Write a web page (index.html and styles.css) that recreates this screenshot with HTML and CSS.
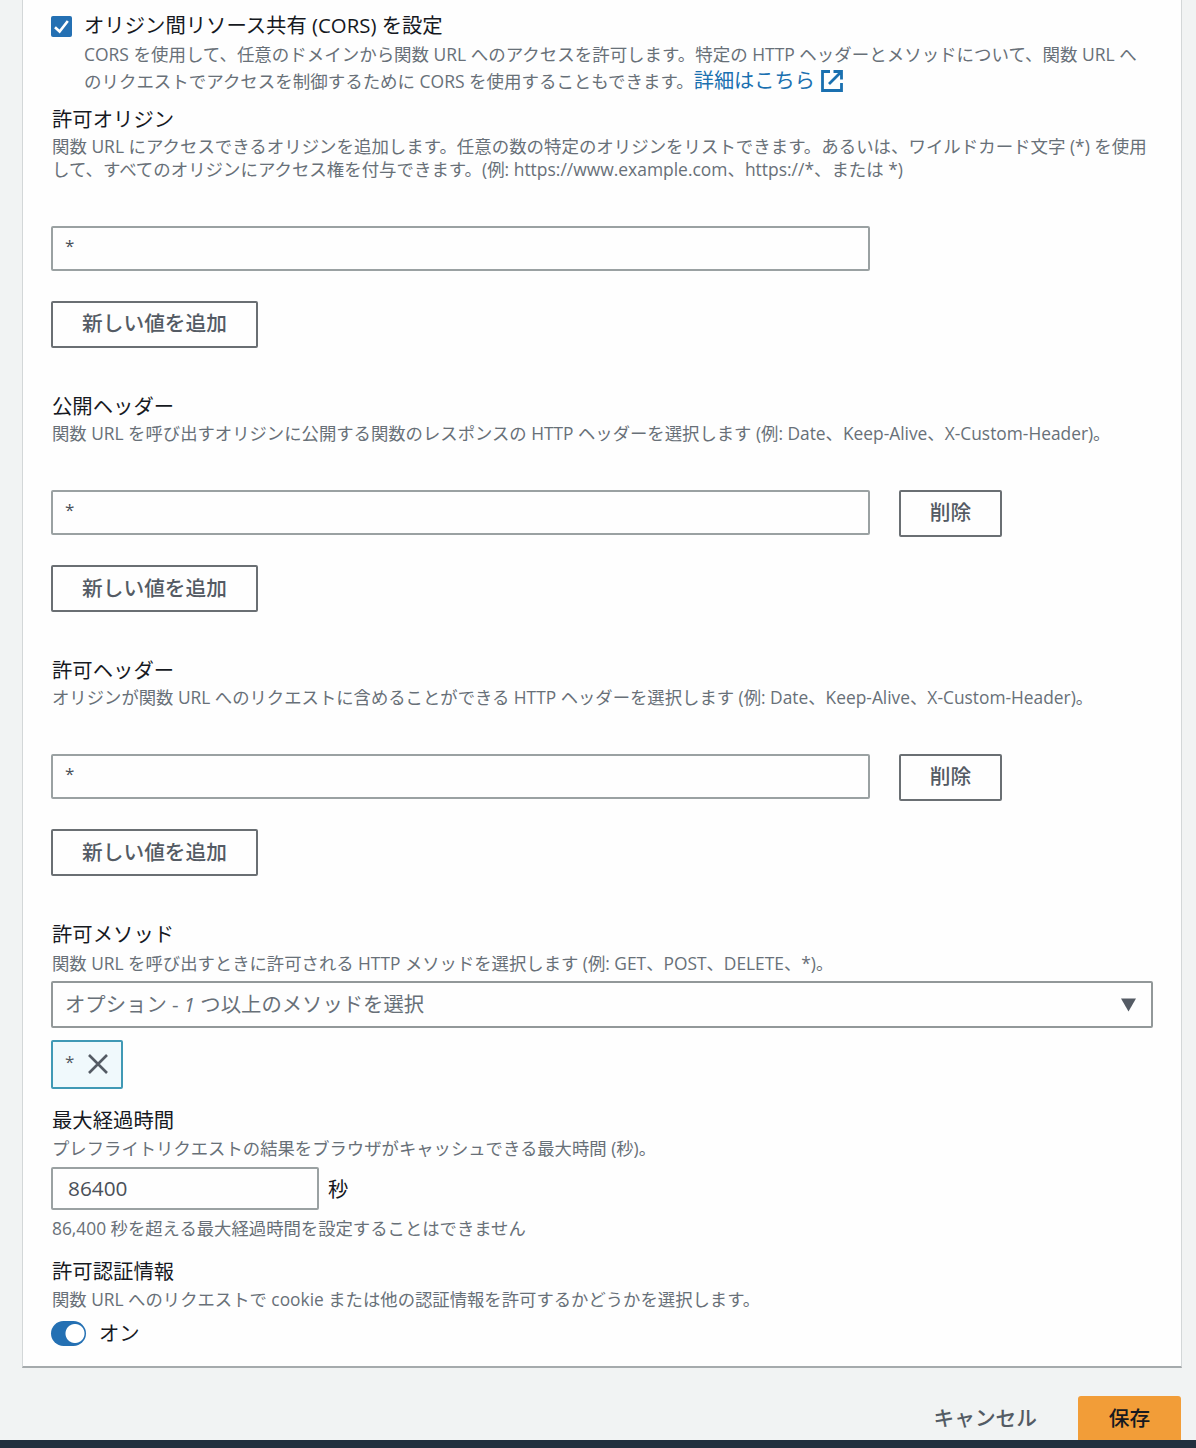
FILE: index.html
```html
<!DOCTYPE html>
<html lang="ja">
<head>
    <meta charset="UTF-8">
    <meta name="viewport" content="width=device-width, initial-scale=1.0">
    <title>関数 URL</title>
    <link rel="stylesheet" href="styles.css">
</head>
<body>

    <div class="card">
        <div class="cors">
            <svg class="checkbox" viewBox="0 0 21 21">
                <rect width="21" height="21" rx="2" fill="#2470b3"/>
                <path d="M4 11.2l4.6 4.3 8.2-10.5" fill="none" stroke="#fff" stroke-width="2.6"/>
            </svg>
            <div>
                <div class="cors-title">オリジン間リソース共有 (CORS) を設定</div>
                <div class="cors-desc">CORS を使用して、任意のドメインから関数 URL へのアクセスを許可します。特定の HTTP ヘッダーとメソッドについて、関数 URL へ<br>のリクエストでアクセスを制御するために CORS を使用することもできます。<a class="link">詳細はこちら<svg class="external" viewBox="0 0 22 22"><path d="M9 1.5H1.5v19h19V13M12.5 1.5h8v8M20.5 1.5L8 14" fill="none" stroke="currentColor" stroke-width="2.8"/></svg></a></div>
            </div>
        </div>

        <div class="field origins">
            <div class="label">許可オリジン</div>
            <div class="desc">関数 URL にアクセスできるオリジンを追加します。任意の数の特定のオリジンをリストできます。あるいは、ワイルドカード文字 (*) を使用<br>して、すべてのオリジンにアクセス権を付与できます。(例: https://www.example.com、https://*、または *)</div>
            <div class="row">
                <input class="input" type="text" value="*">
            </div>
            <button class="btn">新しい値を追加</button>
        </div>

        <div class="field">
            <div class="label">公開ヘッダー</div>
            <div class="desc">関数 URL を呼び出すオリジンに公開する関数のレスポンスの HTTP ヘッダーを選択します (例: Date、Keep-Alive、X-Custom-Header)。</div>
            <div class="row">
                <input class="input" type="text" value="*">
                <button class="btn btn-remove">削除</button>
            </div>
            <button class="btn">新しい値を追加</button>
        </div>

        <div class="field">
            <div class="label">許可ヘッダー</div>
            <div class="desc">オリジンが関数 URL へのリクエストに含めることができる HTTP ヘッダーを選択します (例: Date、Keep-Alive、X-Custom-Header)。</div>
            <div class="row">
                <input class="input" type="text" value="*">
                <button class="btn btn-remove">削除</button>
            </div>
            <button class="btn">新しい値を追加</button>
        </div>

        <div class="field methods">
            <div class="label">許可メソッド</div>
            <div class="desc">関数 URL を呼び出すときに許可される HTTP メソッドを選択します (例: GET、POST、DELETE、*)。</div>
            <div class="select">
                <span>オプション - <i>1</i> つ以上のメソッドを選択</span>
                <svg class="caret" viewBox="0 0 15 14"><path d="M0 .5h15L7.500 13.500z" fill="#545b64"/></svg>
            </div>
            <div class="token">
                <span>*</span>
                <svg class="close" viewBox="0 0 20 20"><path d="M1 1l18 18M19 1L1 19" stroke="#545b64" stroke-width="2.6"/></svg>
            </div>
        </div>

        <div class="field max-age">
            <div class="label">最大経過時間</div>
            <div class="desc">プレフライトリクエストの結果をブラウザがキャッシュできる最大時間 (秒)。</div>
            <div class="age-row">
                <input class="input input-age" type="text" value="86400">
                <span>秒</span>
            </div>
            <div class="desc">86,400 秒を超える最大経過時間を設定することはできません</div>
        </div>

        <div class="field credentials">
            <div class="label">許可認証情報</div>
            <div class="desc">関数 URL へのリクエストで cookie または他の認証情報を許可するかどうかを選択します。</div>
            <div class="toggle-row">
                <span class="toggle"></span>
                <span>オン</span>
            </div>
        </div>
    </div>

    <div class="actions">
        <button class="cancel">キャンセル</button>
        <button class="save">保存</button>
    </div>
    <div class="footer"></div>

</body>
</html>
```
FILE: styles.css
```css
* {
    box-sizing: border-box;
}
body {
    margin: 0;
    height: 1448px;
    overflow: hidden;
    display: flex;
    flex-direction: column;
    background: #f1f3f3;
    color: #16191f;
    font-family: "Open Sans", "Noto Sans CJK JP", sans-serif;
    font-size: 20.35px;
}
.card {
    width: 1160px;
    height: 1368px;
    flex: none;
    margin-left: 22px;
    padding: 11px 28px 0;
    background: #fefefe;
    border: 1px solid #d3d7d8;
    border-top: none;
    border-bottom: 2px solid #a5aaac;
    white-space: nowrap;
}
.cors {
    display: flex;
    gap: 12px;
}
.checkbox {
    width: 21px;
    height: 21px;
    margin-top: 5px;
    flex: none;
}
.cors-title {
    height: 30px;
    line-height: 28px;
}
.cors-desc {
    height: 54px;
    line-height: 27px;
    font-size: 17.48px;
    color: #687078;
}
.link {
    font-size: 20.2px;
    line-height: 20px;
    color: #1a70b0;
}
.external {
    width: 22px;
    height: 22px;
    margin-left: 6px;
    vertical-align: -4px;
}
.field {
    margin-bottom: 45px;
}
.origins {
    margin-top: 11px;
}
.label {
    height: 28px;
    padding-left: 1px;
    line-height: 26px;
}
.desc {
    padding-top: 1px;
    padding-left: 1px;
    font-size: 17.35px;
    line-height: 23px;
    color: #687078;
}
.origins .desc {
    font-size: 17.45px;
}
.row {
    display: flex;
    gap: 29px;
    height: 45px;
    margin: 45px 0 30px;
}
.input {
    width: 819px;
    height: 45px;
    padding: 0 12px 6px;
    border: 2px solid #9aa1a2;
    border-radius: 2px;
    background: #fefefe;
    color: #4a5058;
    font-family: inherit;
    font-size: 17px;
}
.btn {
    display: block;
    width: 207px;
    height: 47px;
    padding: 0 0 4px;
    border: 2px solid #6a6f73;
    border-radius: 2px;
    background: #fefefe;
    color: #545b64;
    font-family: inherit;
    font-size: 20.7px;
    font-weight: 500;
}
.origins .btn {
    padding-bottom: 6px;
}
.btn-remove {
    width: 103px;
    padding-bottom: 6px;
}
.methods {
    margin-bottom: 18px;
}
.methods .desc {
    padding-top: 3px;
}
.select {
    display: flex;
    align-items: center;
    justify-content: space-between;
    height: 47px;
    margin-top: 6px;
    padding: 0 15px 3px 12px;
    border: 2px solid #929899;
    border-radius: 2px;
    color: #687078;
}
.caret {
    width: 15px;
    height: 14px;
    margin-top: 4px;
}
.token {
    display: flex;
    align-items: center;
    gap: 14px;
    width: 72px;
    height: 49px;
    margin-top: 12px;
    padding: 0 12px 2px;
    border: 2px solid #4099b5;
    border-radius: 2px;
    background: #f0f9fc;
    color: #545b64;
    font-size: 17px;
}
.token span {
    margin-bottom: 4px;
}
.close {
    width: 20px;
    height: 20px;
}
.max-age {
    margin-bottom: 18px;
}
.max-age .label + .desc {
    padding-top: 2px;
}
.age-row {
    display: flex;
    align-items: center;
    gap: 9px;
    height: 43px;
    margin: 7px 0 6px;
}
.age-row span {
    margin-bottom: 2px;
}
.input-age {
    width: 268px;
    height: 43px;
    padding: 0 15px 1px;
    font-size: 20.8px;
}
.credentials {
    margin-bottom: 0;
}
.credentials .desc {
    padding-top: 2px;
}
.toggle-row {
    display: flex;
    align-items: center;
    gap: 13px;
    height: 25px;
    margin-top: 10px;
    line-height: 22px;
}
.toggle {
    width: 35px;
    height: 25px;
    border-radius: 13px;
    background: radial-gradient(circle at 24px 12.5px, #fff 9px, #2470b3 10px);
}
.toggle + span {
    margin-bottom: 2px;
}
.actions {
    display: flex;
    justify-content: flex-end;
    flex: none;
    height: 72px;
    padding: 28px 15px 0 0;
    overflow: hidden;
}
.cancel, .save {
    height: 47px;
    padding: 0 0 5px;
    border: none;
    font-family: inherit;
    font-size: 20.7px;
    font-weight: 500;
}
.cancel {
    margin-right: 41px;
    background: none;
    color: #545b64;
}
.save {
    width: 103px;
    border-radius: 3px 3px 0 0;
    background: #f29d38;
    color: #16191f;
}
.footer {
    flex: none;
    height: 8px;
    background: #232f3e;
}
```
